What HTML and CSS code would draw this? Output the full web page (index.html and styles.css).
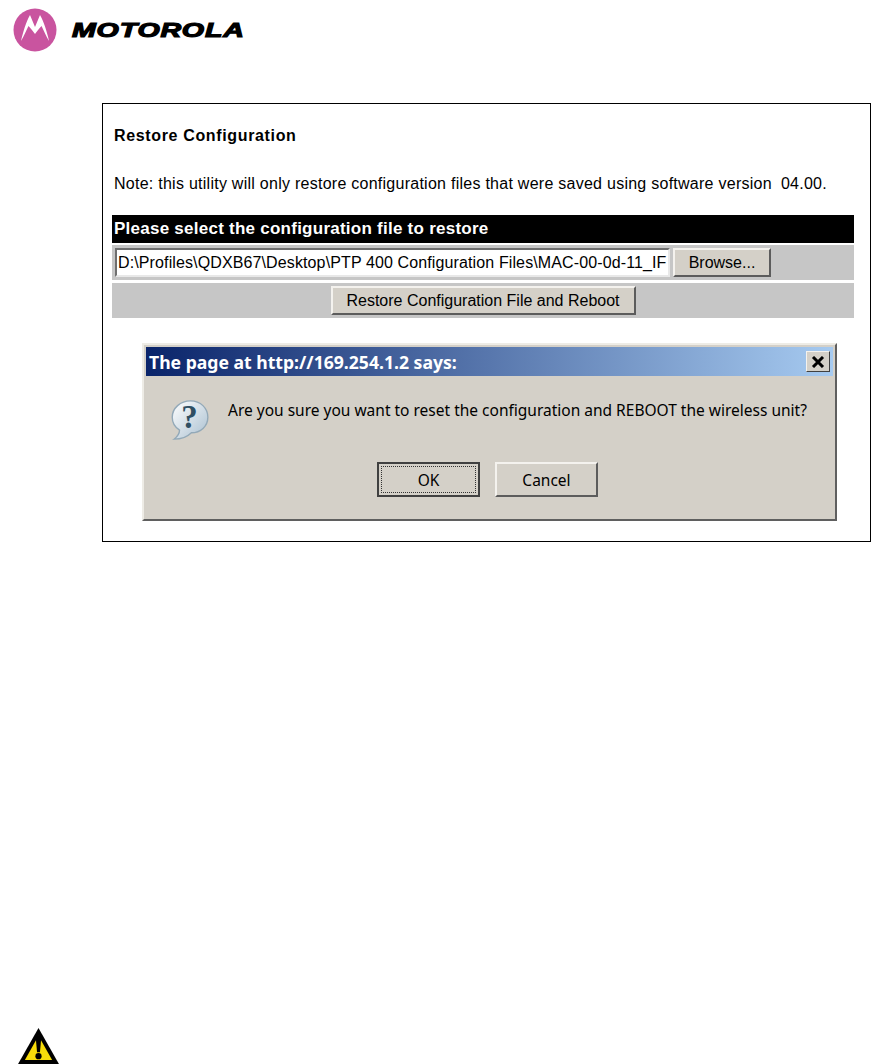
FILE: index.html
```html
<!DOCTYPE html>
<html>
<head>
<meta charset="utf-8">
<title>Restore Configuration</title>
<link rel="stylesheet" href="styles.css">
</head>
<body>

<!-- logo -->
<div class="header">
    <svg class="logo_mark" width="44" height="44" viewBox="0 0 44 44">
        <circle cx="22" cy="22" r="21.5" fill="#c9549f"/>
        <path d="M8 33 C10 24 13 14 17 7 L22 19 L27 7 C31 14 34 24 36 33 C33 28 31 23 28.5 18 C26 21 24 23 22 26 C20 23 18 21 15.5 18 C13 23 11 28 8 33 Z" fill="#fff"/>
    </svg>
    <span class="logo_text">MOTOROLA</span>
</div>

<!-- screenshot frame -->
<div class="frame">
    <div class="page_title">Restore Configuration</div>
    <div class="note">
        <span>Note: this utility will only restore configuration files that were saved using software version</span>
        <span>04.00.</span>
    </div>

    <div class="bar">Please select the configuration file to restore</div>
    <div class="row">
        <div class="file_input">D:\Profiles\QDXB67\Desktop\PTP 400 Configuration Files\MAC-00-0d-11_IF</div>
        <button class="btn btn_browse">Browse...</button>
    </div>
    <div class="row row_center">
        <button class="btn btn_restore">Restore Configuration File and Reboot</button>
    </div>

    <!-- alert -->
    <div class="dialog">
        <div class="dialog_title">
            <span>The page at http://169.254.1.2 says:</span>
            <div class="close_btn">
                <svg width="14" height="12" viewBox="0 0 14 12">
                    <path d="M2 1 L12 11 M12 1 L2 11" stroke="#000" stroke-width="3" fill="none"/>
                </svg>
            </div>
        </div>
        <div class="dialog_body">
            <svg class="question" width="41" height="42" viewBox="0 0 44 46">
                <defs>
                    <linearGradient id="bubble" x1="0" y1="0" x2="1" y2="1">
                        <stop offset="0" stop-color="#ffffff"/>
                        <stop offset="1" stop-color="#a9bfd0"/>
                    </linearGradient>
                </defs>
                <path d="M22 2 C33 2 41 10 41 20 C41 30 33 37 23 37 C19 41 13 44 4 44 C8 41 10 38 10 34 C5 31 2 26 2 20 C2 10 11 2 22 2 Z" fill="url(#bubble)" stroke="#93a9b8" stroke-width="1.5"/>
                <text x="21" y="32" text-anchor="middle" class="question_mark">?</text>
            </svg>
            <div class="dialog_msg">Are you sure you want to reset the configuration and REBOOT the wireless unit?</div>
        </div>
        <div class="dialog_buttons">
            <div class="dlg_btn dlg_btn_default"><span class="focus_ring">OK</span></div>
            <div class="dlg_btn">Cancel</div>
        </div>
    </div>
</div>

<!-- warning sign at bottom of the page -->
<div class="warning">
    <svg width="41" height="36" viewBox="0 0 42 37">
        <path d="M21 0 L42 37 L0 37 Z" fill="#000"/>
        <path d="M21 8 L35 33 L7 33 Z" fill="#f7dc0a"/>
        <path d="M18 8 L24 8 L22.5 25 L19.5 25 Z" fill="#000"/>
        <circle cx="21" cy="29" r="3.2" fill="#000"/>
    </svg>
</div>

</body>
</html>
```

FILE: styles.css
```css
body
{
  margin: 0;
  background-color: #fff;
  color: #000;
  font-family: "Liberation Sans", Arial, sans-serif;
  overflow: hidden;
}

/* Header */
.header
{
  height: 103px;
  display: flex;
  align-items: flex-start;
  padding-left: 13px;
  box-sizing: border-box;
}

.logo_mark
{
  margin-top: 8px;
}

.logo_text
{
  margin-left: 15px;
  margin-top: 16px;
  font-size: 21px;
  line-height: 28px;
  font-weight: bold;
  font-style: italic;
  letter-spacing: 0.6px;
  -webkit-text-stroke: 1.2px #000;
  transform: scaleX(1.36);
  transform-origin: left center;
}

/* Frame */
.frame
{
  margin-left: 102px;
  width: 769px;
  height: 439px;
  box-sizing: border-box;
  border: 1px solid #000;
  padding: 22px 16px 0 9px;
}

.page_title
{
  margin-left: 2px;
  font-size: 16px;
  letter-spacing: 0.65px;
  line-height: 20px;
  font-weight: bold;
}

.note
{
  margin: 28px 0 0 2px;
  font-size: 16px;
  letter-spacing: 0.26px;
  line-height: 20px;
  display: flex;
  gap: 9px;
  white-space: nowrap;
}

.bar
{
  margin-top: 21px;
  height: 28px;
  padding-left: 2px;
  background-color: #000;
  color: #fff;
  font-size: 17px;
  letter-spacing: 0.25px;
  line-height: 28px;
  font-weight: bold;
}

.row
{
  margin-top: 2px;
  height: 35px;
  background-color: #c6c6c6;
  display: flex;
  align-items: center;
  padding-left: 3px;
}

.row_center
{
  margin-top: 3px;
  justify-content: center;
  padding-left: 0;
}

.file_input
{
  width: 555px;
  height: 29px;
  box-sizing: border-box;
  background-color: #fff;
  border: 2px solid;
  border-color: #6f6f6f #e8e8e8 #e8e8e8 #6f6f6f;
  padding-left: 1px;
  font-size: 16px;
  letter-spacing: 0.12px;
  line-height: 26px;
  white-space: nowrap;
  overflow: hidden;
}

.btn
{
  height: 29px;
  padding: 0;
  box-sizing: border-box;
  background-color: #d4d0c8;
  border: 2px solid;
  border-color: #f4f2ee #5c5c5c #5c5c5c #f4f2ee;
  font-family: "Liberation Sans", Arial, sans-serif;
  font-size: 16px;
  color: #000;
}

.btn_browse
{
  width: 98px;
  margin-left: 3px;
}

.btn_restore
{
  width: 305px;
}

/* Alert dialog */
.dialog
{
  margin: 25px 0 0 30px;
  width: 695px;
  height: 178px;
  box-sizing: border-box;
  background-color: #d4d0c8;
  border: 2px solid;
  border-color: #eeece6 #5f5f5f #5f5f5f #eeece6;
  padding: 2px 2px 0 2px;
}

.dialog_title
{
  height: 29px;
  background: linear-gradient(to right, #0a246a, #a6caf0);
  color: #fff;
  display: flex;
  align-items: center;
  justify-content: space-between;
  padding: 0 3px 0 3px;
  font-family: "Noto Sans", sans-serif;
  font-size: 17.6px;
  font-weight: bold;
}

.close_btn
{
  width: 24px;
  height: 21px;
  box-sizing: border-box;
  background-color: #d4d0c8;
  border: 1px solid;
  border-color: #f4f2ee #404040 #404040 #f4f2ee;
  display: flex;
  align-items: center;
  justify-content: center;
}

.dialog_body
{
  display: flex;
  align-items: flex-start;
  height: 86px;
  box-sizing: border-box;
  padding: 23px 0 0 24px;
}

.question_mark
{
  font-family: "Liberation Serif", serif;
  font-size: 36px;
  font-weight: bold;
  fill: #2f4f63;
}

.dialog_msg
{
  margin: 0 0 0 17px;
  font-family: "Noto Sans", sans-serif;
  font-size: 15.5px;
  line-height: 22px;
  white-space: nowrap;
}

.dialog_buttons
{
  display: flex;
  justify-content: flex-start;
  gap: 15px;
  padding-left: 231px;
}

.dlg_btn
{
  width: 103px;
  height: 35px;
  box-sizing: border-box;
  background-color: #d4d0c8;
  border: 2px solid;
  border-color: #f4f2ee #5c5c5c #5c5c5c #f4f2ee;
  display: flex;
  align-items: center;
  justify-content: center;
  font-family: "Noto Sans", sans-serif;
  font-size: 15.5px;
}

.dlg_btn_default
{
  border: 2px solid #404040;
  padding: 2px;
}

.focus_ring
{
  flex: 1;
  align-self: stretch;
  display: flex;
  align-items: center;
  justify-content: center;
  border: 1px dotted #333;
}

/* Warning */
.warning
{
  margin: 486px 0 0 18px;
  height: 36px;
}
```
